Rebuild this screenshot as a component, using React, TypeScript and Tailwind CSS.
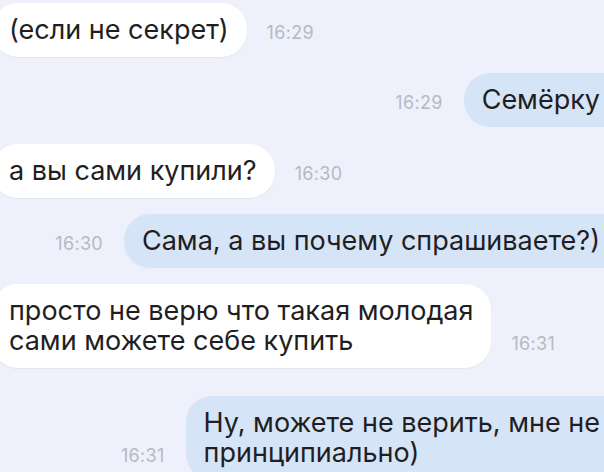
const font = { fontFamily: 'Inter, "Liberation Sans", Arial, sans-serif' };

type Msg = {
  out: boolean;
  time: string;
  lines: string[];
  gap: string;
};

const messages: Msg[] = [
  { out: false, time: '16:29', lines: ['(если не секрет)'], gap: 'mt-[3px]' },
  { out: true, time: '16:29', lines: ['Семёрку'], gap: 'mt-[16px]' },
  { out: false, time: '16:30', lines: ['а вы сами купили?'], gap: 'mt-[17px]' },
  { out: true, time: '16:30', lines: ['Сама, а вы почему спрашиваете?)'], gap: 'mt-[16px]' },
  { out: false, time: '16:31', lines: ['просто не верю что такая молодая', 'сами можете себе купить'], gap: 'mt-[16px]' },
  { out: true, time: '16:31', lines: ['Ну, можете не верить, мне не', 'принципиально)'], gap: 'mt-[28px]' },
];

function Time({ value }: { value: string }) {
  return (
    <span className="mb-[15px] shrink-0 text-[18px] leading-[18px] tracking-[0.3px] text-[#b5b9c2]">{value}</span>
  );
}

export default function App() {
  return (
    <div className="h-[472px] w-[604px] overflow-hidden bg-[#eef1fb]" style={font}>
      {messages.map((m, i) => (
        <div
          key={i}
          className={`flex items-end ${m.gap} ${m.out ? 'justify-end mr-[-30px] gap-[21px]' : 'ml-[-8px] gap-[20px]'}`}
        >
          {m.out && <Time value={m.time} />}
          <div
            className={`whitespace-nowrap rounded-[26px] py-[12px] text-[27px] leading-[30px] text-[#1f1f22] ${
              m.out ? 'bg-[#d6e4f8] pl-[18px] pr-[34px]' : 'bg-white pl-[17px] pr-[18px] shadow-[0_1px_1px_rgba(0,0,0,0.05)]'
            }`}
          >
            {m.lines.map((l, j) => (
              <div key={j}>{l}</div>
            ))}
          </div>
          {!m.out && <Time value={m.time} />}
        </div>
      ))}
    </div>
  );
}
